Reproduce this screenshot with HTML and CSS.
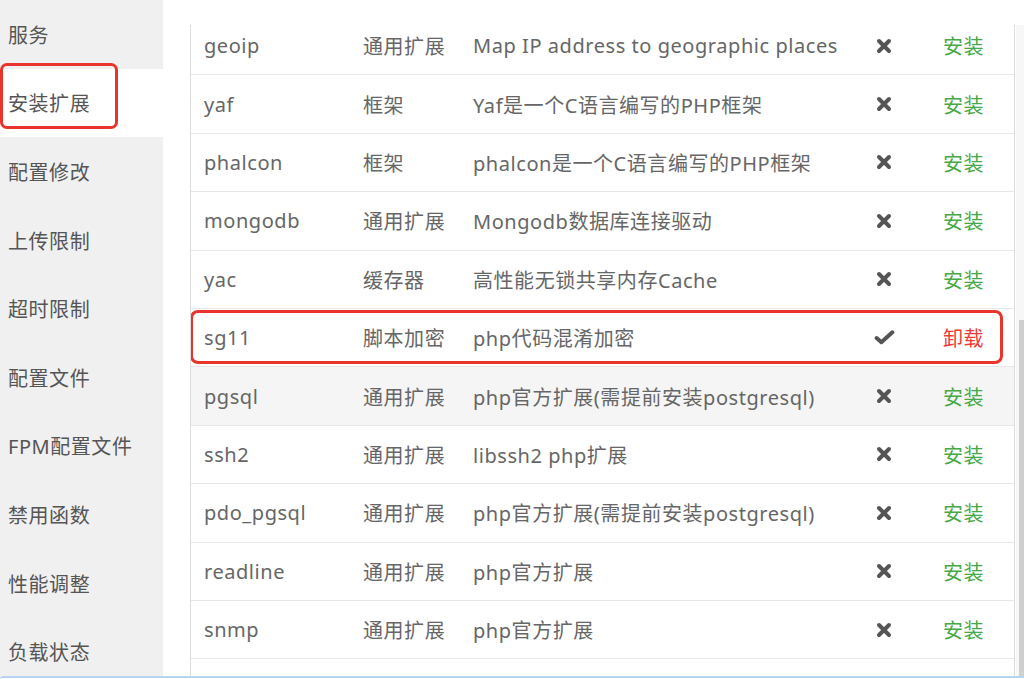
FILE: index.html
```html
<!DOCTYPE html>
<html lang="zh-CN">
<head>
    <meta charset="UTF-8">
    <title>PHP 安装扩展</title>
    <link rel="stylesheet" href="styles.css">
</head>
<body>
    <div class="frame">
        <!-- 左侧菜单 -->
        <div class="menu">
            <div class="menu-item">服务</div>
            <div class="menu-item active">安装扩展</div>
            <div class="menu-item">配置修改</div>
            <div class="menu-item">上传限制</div>
            <div class="menu-item">超时限制</div>
            <div class="menu-item">配置文件</div>
            <div class="menu-item">FPM配置文件</div>
            <div class="menu-item">禁用函数</div>
            <div class="menu-item">性能调整</div>
            <div class="menu-item">负载状态</div>
        </div>

        <!-- 扩展列表 -->
        <div class="main">
            <div class="list-box">
                <div class="list">
                    <div class="row">
                        <div class="c-name">geoip</div>
                        <div class="c-type">通用扩展</div>
                        <div class="c-desc">Map IP address to geographic places</div>
                        <div class="c-status"><svg class="ico-x" viewBox="0 0 16 16"><path d="M3 3 L13 13 M13 3 L3 13"/></svg></div>
                        <div class="c-act"><a class="btn-install">安装</a></div>
                    </div>
                    <div class="row">
                        <div class="c-name">yaf</div>
                        <div class="c-type">框架</div>
                        <div class="c-desc">Yaf是一个C语言编写的PHP框架</div>
                        <div class="c-status"><svg class="ico-x" viewBox="0 0 16 16"><path d="M3 3 L13 13 M13 3 L3 13"/></svg></div>
                        <div class="c-act"><a class="btn-install">安装</a></div>
                    </div>
                    <div class="row">
                        <div class="c-name">phalcon</div>
                        <div class="c-type">框架</div>
                        <div class="c-desc">phalcon是一个C语言编写的PHP框架</div>
                        <div class="c-status"><svg class="ico-x" viewBox="0 0 16 16"><path d="M3 3 L13 13 M13 3 L3 13"/></svg></div>
                        <div class="c-act"><a class="btn-install">安装</a></div>
                    </div>
                    <div class="row">
                        <div class="c-name">mongodb</div>
                        <div class="c-type">通用扩展</div>
                        <div class="c-desc">Mongodb数据库连接驱动</div>
                        <div class="c-status"><svg class="ico-x" viewBox="0 0 16 16"><path d="M3 3 L13 13 M13 3 L3 13"/></svg></div>
                        <div class="c-act"><a class="btn-install">安装</a></div>
                    </div>
                    <div class="row">
                        <div class="c-name">yac</div>
                        <div class="c-type">缓存器</div>
                        <div class="c-desc">高性能无锁共享内存Cache</div>
                        <div class="c-status"><svg class="ico-x" viewBox="0 0 16 16"><path d="M3 3 L13 13 M13 3 L3 13"/></svg></div>
                        <div class="c-act"><a class="btn-install">安装</a></div>
                    </div>
                    <div class="row marked">
                        <div class="c-name">sg11</div>
                        <div class="c-type">脚本加密</div>
                        <div class="c-desc">php代码混淆加密</div>
                        <div class="c-status"><svg class="ico-ok" viewBox="0 0 20 16"><path d="M2.5 8.5 L7 12.5 L17.5 3"/></svg></div>
                        <div class="c-act"><a class="btn-remove">卸载</a></div>
                    </div>
                    <div class="row hover">
                        <div class="c-name">pgsql</div>
                        <div class="c-type">通用扩展</div>
                        <div class="c-desc">php官方扩展(需提前安装postgresql)</div>
                        <div class="c-status"><svg class="ico-x" viewBox="0 0 16 16"><path d="M3 3 L13 13 M13 3 L3 13"/></svg></div>
                        <div class="c-act"><a class="btn-install">安装</a></div>
                    </div>
                    <div class="row">
                        <div class="c-name">ssh2</div>
                        <div class="c-type">通用扩展</div>
                        <div class="c-desc">libssh2 php扩展</div>
                        <div class="c-status"><svg class="ico-x" viewBox="0 0 16 16"><path d="M3 3 L13 13 M13 3 L3 13"/></svg></div>
                        <div class="c-act"><a class="btn-install">安装</a></div>
                    </div>
                    <div class="row">
                        <div class="c-name">pdo_pgsql</div>
                        <div class="c-type">通用扩展</div>
                        <div class="c-desc">php官方扩展(需提前安装postgresql)</div>
                        <div class="c-status"><svg class="ico-x" viewBox="0 0 16 16"><path d="M3 3 L13 13 M13 3 L3 13"/></svg></div>
                        <div class="c-act"><a class="btn-install">安装</a></div>
                    </div>
                    <div class="row">
                        <div class="c-name">readline</div>
                        <div class="c-type">通用扩展</div>
                        <div class="c-desc">php官方扩展</div>
                        <div class="c-status"><svg class="ico-x" viewBox="0 0 16 16"><path d="M3 3 L13 13 M13 3 L3 13"/></svg></div>
                        <div class="c-act"><a class="btn-install">安装</a></div>
                    </div>
                    <div class="row">
                        <div class="c-name">snmp</div>
                        <div class="c-type">通用扩展</div>
                        <div class="c-desc">php官方扩展</div>
                        <div class="c-status"><svg class="ico-x" viewBox="0 0 16 16"><path d="M3 3 L13 13 M13 3 L3 13"/></svg></div>
                        <div class="c-act"><a class="btn-install">安装</a></div>
                    </div>
                    <div class="row"></div>
                </div>
            </div>
            <div class="scrollbar"><div class="thumb"></div></div>
        </div>
    </div>
    <div class="edge"></div>
</body>
</html>
```

FILE: styles.css
```css
html, body {
    margin: 0;
    height: 679px;
    overflow: hidden;
}
body {
    font-family: "Noto Sans", "Noto Sans CJK SC", sans-serif;
    font-size: 20px;
    letter-spacing: 0.55px;
    color: #666;
    background: #fff;
    display: flex;
    flex-direction: column;
}
.frame {
    display: flex;
    height: 676px;
}

/* menu */
.menu {
    width: 163px;
    flex-shrink: 0;
    background: #f0f0f0;
}
.menu-item {
    height: 68.6px;
    display: flex;
    align-items: center;
    padding-left: 8px;
    color: #555;
    white-space: nowrap;
}
.menu-item.active {
    background: #fff;
    position: relative;
}
.menu-item.active::after {
    content: "";
    position: absolute;
    left: 0;
    top: -6px;
    width: 112px;
    height: 60px;
    border: 3px solid #e8342b;
    border-radius: 7px;
}

/* list */
.main {
    flex: 1;
    display: flex;
    padding-top: 25px;
    padding-left: 27px;
}
.list-box {
    flex: 1;
    border-left: 1px solid #ddd;
    border-right: 1px solid #ddd;
    overflow: hidden;
}
.list {
    margin-top: -8px;
}
.row {
    display: grid;
    grid-template-columns: 172px 110px 1fr 48px 106px;
    align-items: center;
    height: 58.4px;
    box-sizing: border-box;
    border-bottom: 1px solid #e6e6e6;
    white-space: nowrap;
}
.row.hover {
    background: #f5f5f5;
}
.row.marked {
    position: relative;
}
.row.marked::after {
    content: "";
    position: absolute;
    left: -1px;
    top: 1px;
    width: 807px;
    height: 48px;
    border: 3px solid #e8342b;
    border-radius: 8px;
}
.c-name {
    padding-left: 13px;
}
.c-status {
    display: flex;
    justify-content: center;
    align-items: center;
}
.c-act {
    padding-left: 35px;
}
.ico-x {
    width: 16px;
    height: 16px;
    fill: none;
    stroke: #555;
    stroke-width: 4;
    stroke-linecap: round;
}
.ico-ok {
    width: 21px;
    height: 17px;
    fill: none;
    stroke: #555;
    stroke-width: 3.8;
    stroke-linecap: round;
    stroke-linejoin: round;
}
.btn-install {
    color: #46a846;
}
.btn-remove {
    color: #ee3b35;
}

/* scrollbar */
.scrollbar {
    width: 8px;
    margin-left: 1px;
    background: #f7f7f7;
    display: flex;
    flex-direction: column;
}
.thumb {
    margin-top: 295px;
    margin-left: 3px;
    flex: 1;
    background: #cfcfcf;
}

.edge {
    height: 3px;
    border-top: 2px solid #b9d3f3;
    border-top-left-radius: 6px;
    box-sizing: border-box;
    background: #fff;
}
```
